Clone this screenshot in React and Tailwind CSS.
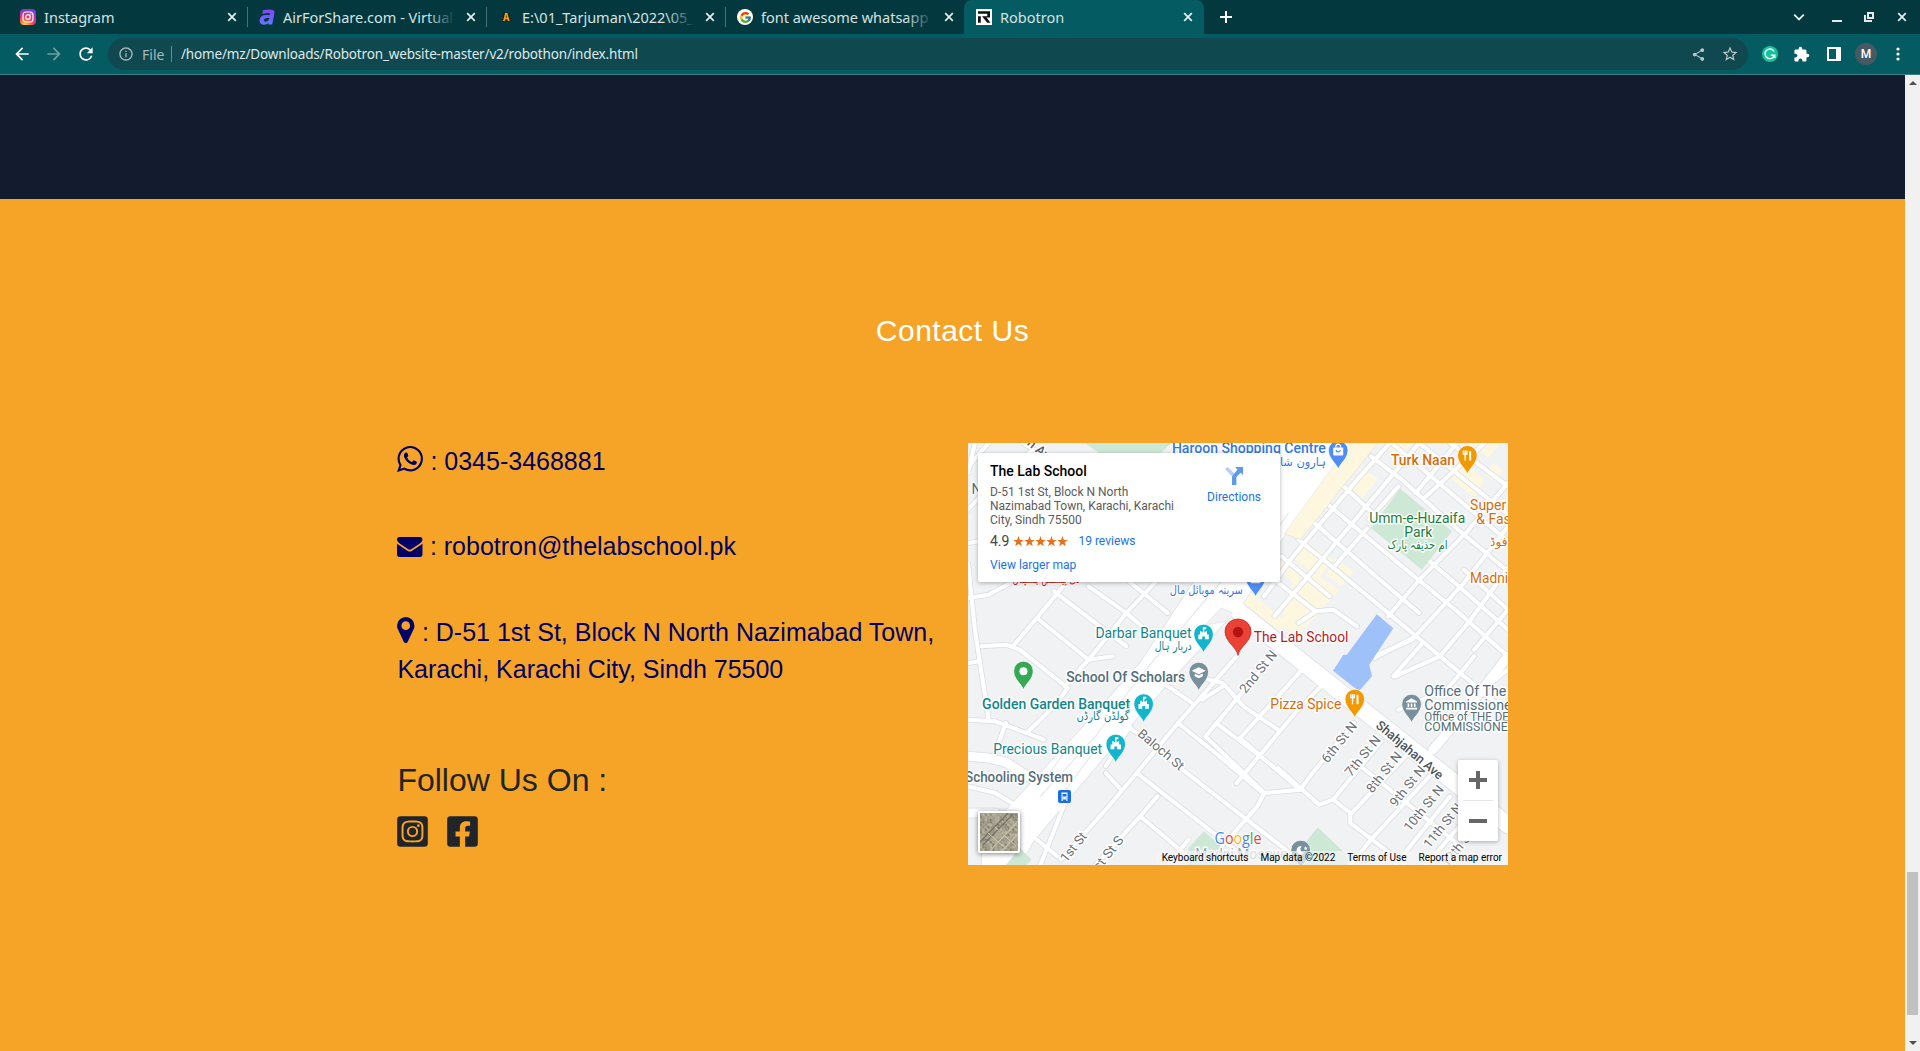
import React from "react";
import { FaFacebookSquare, FaInstagramSquare } from "react-icons/fa";
import { MdArrowBack, MdArrowForward, MdRefresh, MdInfoOutline, MdShare, MdStarBorder, MdExtension } from "react-icons/md";
import { FcGoogle } from "react-icons/fc";

/* ---------- browser chrome ---------- */

function CloseX({ className = "" }) {
  return (
    <svg viewBox="0 0 16 16" className={"h-4 w-4 shrink-0 " + className} fill="none" stroke="#e4efef" strokeWidth="1.7">
      <path d="M4.2 4.2l7.6 7.6M11.8 4.2l-7.6 7.6" />
    </svg>
  );
}

function InstagramIcon() {
  return (
    <svg viewBox="0 0 16 16" className="h-4 w-4 shrink-0">
      <defs>
        <radialGradient id="ig" cx="0.3" cy="1.05" r="1.05">
          <stop offset="0" stopColor="#ffdd55" />
          <stop offset="0.3" stopColor="#fb7c3c" />
          <stop offset="0.6" stopColor="#e0357a" />
          <stop offset="1" stopColor="#7a3ad8" />
        </radialGradient>
      </defs>
      <rect width="16" height="16" rx="4" fill="url(#ig)" />
      <rect x="3" y="3" width="10" height="10" rx="3" fill="none" stroke="#fff" strokeWidth="1.2" />
      <circle cx="8" cy="8" r="2.3" fill="none" stroke="#fff" strokeWidth="1.2" />
      <circle cx="11" cy="5" r="0.7" fill="#fff" />
    </svg>
  );
}

function AirIcon() {
  return (
    <svg viewBox="0 0 16 16" className="h-4 w-4 shrink-0" fill="none">
      <defs>
        <linearGradient id="air" x1="0" y1="0" x2="0" y2="1">
          <stop offset="0" stopColor="#8a3ffc" />
          <stop offset="1" stopColor="#5b7cfa" />
        </linearGradient>
      </defs>
      <path d="M4 1.2Q9 0 13 .8Q16 1.2 15.4 4L13.2 15.6H9.4L9.6 14.3Q7 16.3 3.6 15.6Q.2 14.6 .6 11Q1.2 6.2 7.3 6.1L11 6Q11.4 4 9.4 4Q6.5 4 3.4 5ZM10.5 8.8L7.6 9Q5 9.3 4.8 11.2Q4.9 13 7 12.6Q9.8 12.2 10.5 8.8Z" fill="url(#air)" fillRule="evenodd" />
    </svg>
  );
}

function AppIcon() {
  return (
    <svg viewBox="0 0 16 16" className="h-4 w-4 shrink-0">
      <rect x="4.5" y="4" width="8" height="9" fill="#1c2326" />
      <path d="M7.2 4h2.2l2.2 8H9.8l-.4-1.8H7.2L6.8 12H5zM7.6 8.6h1.4l-.7-2.8z" fill="#f7a600" fillRule="evenodd" />
    </svg>
  );
}

function GoogleIcon() {
  return (
    <span className="flex h-4 w-4 shrink-0 items-center justify-center rounded-full bg-white">
      <FcGoogle size={13} />
    </span>
  );
}

function RobotronIcon() {
  return (
    <svg viewBox="0 0 16 16" className="h-4 w-4 shrink-0">
      <rect width="16" height="16" fill="#fff" />
      <path d="M2 2.2h12v6.2h-3.4l3.8 5.4h-3.2L6 7.2h5.3V4.7H2zM2 7.2h2.8v6.6H2z" fill="#111" />
    </svg>
  );
}

function Tab({ icon, title, fade, sep }) {
  return (
    <div className="flex h-[34px] w-[239px] shrink-0 items-center pl-[11px]">
      {icon}
      <div className="relative ml-2 w-[172px] shrink-0 overflow-hidden whitespace-nowrap text-[14.5px] leading-[20px] text-[#d5e2e2]">
        {title}
        {fade && <div className="absolute inset-y-0 right-0 w-7 bg-gradient-to-r from-transparent to-[#03393e]" />}
      </div>
      <CloseX className="ml-2" />
      {sep && <div className="ml-[7px] h-5 w-px bg-[#4a7377]" />}
    </div>
  );
}

function TabStrip() {
  return (
    <div className="flex h-[34px] bg-[#03393e] pl-[9px]">
      <Tab icon={<InstagramIcon />} title="Instagram" sep />
      <Tab icon={<AirIcon />} title="AirForShare.com - Virtual D" fade sep />
      <Tab icon={<AppIcon />} title="E:\01_Tarjuman\2022\05_M" fade sep />
      <Tab icon={<GoogleIcon />} title="font awesome whatsapp c" fade />
      <div className="-ml-px flex h-[34px] w-[240px] items-center rounded-t-lg bg-[#045b61] pl-3">
        <RobotronIcon />
        <div className="ml-2 w-[172px] text-[14.5px] leading-[20px] text-[#d5e2e2]">Robotron</div>
        <CloseX className="ml-2" />
      </div>
      <svg viewBox="0 0 16 16" className="ml-[14px] mt-[9px] h-4 w-4" stroke="#fff" strokeWidth="2">
        <path d="M8 2v12M2 8h12" />
      </svg>
      <div className="ml-auto flex h-[34px] items-center pr-[10px]">
        <svg viewBox="0 0 16 16" className="h-4 w-4" fill="none" stroke="#e4efef" strokeWidth="1.8">
          <path d="M3.2 5.6L8 10.4l4.8-4.8" />
        </svg>
        <div className="ml-[25px] mt-[8px] h-[2px] w-[10px] bg-[#e4e9ee]" />
        <svg viewBox="0 0 10 10" className="ml-[22px] h-[10px] w-[10px]" fill="none" stroke="#e4e9ee" strokeWidth="2">
          <path d="M4 1h5v5H4zM1 3v6h7" />
        </svg>
        <CloseX className="ml-5" />
      </div>
    </div>
  );
}

function Toolbar() {
  return (
    <div className="flex h-[41px] items-center border-b border-[#3f7f84] bg-[#045b61] text-white">
      <MdArrowBack size={20} className="ml-3" />
      <MdArrowForward size={20} className="ml-3 text-[#6f9ea2]" />
      <MdRefresh size={20} className="ml-3" />
      <div className="ml-3 flex h-8 w-[1640px] items-center rounded-full bg-[#10484f] pl-[10px] text-[14px] text-[#a6b9bb]">
        <MdInfoOutline size={16} />
        <span className="ml-2 w-[22px]">File</span>
        <div className="ml-[7px] h-4 w-px bg-[#6b8c8f]" />
        <span className="ml-[9px] whitespace-nowrap text-[13.5px] tracking-[-0.16px] text-[#dfe8e8]">/home/mz/Downloads/Robotron_website-master/v2/robothon/index.html</span>
        <MdShare size={15} className="ml-auto text-[#bccaca]" />
        <MdStarBorder size={18} className="ml-[15px] mr-[9px] text-[#bccaca]" />
      </div>
      <div className="ml-[14px] flex h-4 w-4 items-center justify-center rounded-full bg-[#15c39a]">
        <svg viewBox="0 0 16 16" className="h-4 w-4" fill="none" stroke="#fff" strokeWidth="1.4">
          <path d="M12 5.3A4.8 4.8 0 1 0 12.4 9.4M12.8 12V9.2H8.8" />
        </svg>
      </div>
      <MdExtension size={17} className="ml-[15px]" />
      <svg viewBox="0 0 14 14" className="ml-[17px] h-[14px] w-[14px]">
        <path d="M0 0h14v14H0zM2 2v10h7V2z" fill="#fff" fillRule="evenodd" />
      </svg>
      <div className="ml-[14px] flex h-[22px] w-[22px] items-center justify-center rounded-full bg-[#455a64] font-['Roboto'] text-[12px] font-medium">M</div>
      <svg viewBox="0 0 4 14" className="ml-[19px] h-[14px] w-1" fill="#fff">
        <circle cx="2" cy="2" r="1.6" />
        <circle cx="2" cy="7" r="1.6" />
        <circle cx="2" cy="12" r="1.6" />
      </svg>
    </div>
  );
}

/* ---------- map ---------- */

const STREETS = [
  // north-east blocks
  "M1170 40L1260 110L1400 240L1568 385",
  "M1080 120L1170 205L1420 425L1568 560",
  "M1040 180L1290 395L1420 505L1568 640",
  "M1000 235L1230 440L1310 510",
  "M960 290L1080 390L1290 570L1568 810",
  "M910 340L1050 460",
  "M870 395L1010 505",
  "M1230 0L1568 295",
  "M1310 0L1568 215",
  "M1400 0L1568 130",
  "M1568 500L1440 380",
  "M1225 0L1130 110L940 345L860 460",
  "M1310 0L1100 260L1000 385L890 520",
  "M1250 130L1165 230",
  "M1160 255L1060 375",
  "M1420 0L1380 50L1300 150",
  "M1500 0L1330 160",
  "M1568 120L1450 265L1320 400L1220 520",
  "M1568 250L1440 420L1290 590L1180 640",
  "M1568 375L1460 530L1370 640L1240 700",
  "M1568 500L1470 620",
  "M960 540L1010 505L1060 500L1130 550",
  "M1290 585L1180 645",
  "M1320 600L1235 700",
  "M1470 640L1390 740L1250 800",
  "M1568 680L1470 760",
  // south blocks
  "M450 840L490 870L610 970L860 1170L980 1266",
  "M510 680L650 780",
  "M610 840L730 940L850 1045",
  "M690 880L860 1050",
  "M740 730L680 770",
  "M720 840L850 940L965 1040",
  "M790 885L850 940",
  "M660 700L740 720L800 790L900 860",
  "M970 680L900 760L790 885",
  "M900 620L690 880",
  "M1020 735L950 810L780 1020",
  "M1120 840L1000 990L965 1040L860 1050L840 1090L690 1266",
  "M900 975L1020 1085L1060 1070L1200 895",
  "M1060 1070L1110 1110",
  "M1140 970L1310 1110L1430 1210",
  "M1270 940L1110 1115L1110 1140L1270 1266",
  "M1340 1000L1170 1190L1110 1266",
  "M1400 1060L1240 1266",
  "M1460 1110L1330 1266",
  "M780 640L610 840L490 990L400 1100L270 1250",
  "M400 990L440 1035",
  "M490 990L800 1240",
  "M550 1060L500 1120L370 1266",
  "M500 1120L650 1250",
  "M640 1190L580 1266",
  "M470 850L400 970",
  // north-west blocks
  "M250 445L345 520L460 610",
  "M200 525L350 650L420 640",
  "M350 430L460 510L560 600",
  "M450 400L580 510",
  "M280 425L200 525L130 610",
  "M560 400L460 510L350 650L280 730",
  "M0 465L60 455L140 410",
  "M40 610L110 605L150 620L290 735L250 790L170 870",
  "M0 360L20 560L60 830",
  "M20 0L0 90",
  "M0 300L60 290",
  "M0 660L35 655",
  "M0 830L80 835L170 870L220 890",
  "M110 840L75 940",
  "M0 1030L80 1050L150 1095",
  "M160 0L330 110",
  "M0 200L80 110L190 20",
  "M60 0L10 60",
  "M290 1060L270 1110L210 1266",
  "M200 1190L260 1240",
];

const BOLD_ROADS = ["M0 940L60 945L110 958L190 1010", "M1568 640L1440 810L1350 920", "M0 1110L80 1110"];

const CREAM = [
  "M1110 0H1190L965 290L920 272Z",
  "M1145 75L1190 108L1145 165L1105 125Z",
  "M1400 105L1440 60L1500 110L1470 165Z",
  "M1470 0H1545L1510 45Z",
  "M1200 0H1290L1250 45Z",
  "M1525 60L1555 85L1530 115L1500 95Z",
  "M985 300L1060 350L1020 405L950 350Z",
  "M1065 345L1120 385L1085 430L1040 395Z",
  "M920 335L980 385L950 425L900 375Z",
  "M820 450L925 535L900 560L800 480Z",
  "M930 440L990 385L1080 440L960 575L910 555Z",
];

const HWY = "M880 0H1130L920 275L800 480L640 655L470 850L190 1195L150 1266H40V1180L130 1080L300 890L500 660L640 440L870 100Z";

// Label coordinates are in street units; they are scaled to pixels here.
const px = (x) => x / 2.9037;
const py = (y) => y / 3;

function Label({ x, y, w, size = 14, fill, weight = 400, anchor = "start", rot = 0, halo = 3, rtl, children }) {
  return (
    <text
      transform={"translate(" + px(x) + " " + py(y) + ") rotate(" + rot + ")"}
      fontSize={size}
      fontWeight={weight}
      fontFamily={rtl ? '"DejaVu Sans", sans-serif' : "Roboto, sans-serif"}
      textAnchor={anchor}
      textLength={w}
      lengthAdjust="spacingAndGlyphs"
      fill={fill}
      stroke="#fff"
      strokeWidth={halo}
      strokeLinejoin="round"
      paintOrder="stroke"
    >
      {children}
    </text>
  );
}

function Pin({ x, y, fill, children }) {
  return (
    <g transform={"translate(" + px(x) + " " + py(y) + ")"}>
      <path d="M0 0C-1.2-5.5-9.8-10.5-9.8-19A9.8 9.8 0 0 1 9.8-19C9.8-10.5 1.2-5.5 0 0Z" fill={fill} stroke="#fff" strokeWidth="0.7" />
      <g transform="translate(0 -18.8)">{children}</g>
    </g>
  );
}

const Castle = () => (
  <path d="M-5.200 5V.2H-3.400V-3.200H-2V-2H-.7V-7H2.600V-5H.7V-2H2V-3.200H3.400V.2H5.200V5H1.400V2.200H-1.400V5Z" fill="#fff" />
);
const Fork = () => (
  <g stroke="#fff" fill="none">
    <path d="M-4-5v3.4h3.6V-5M-2.2-5V5" strokeWidth="1.4" />
    <path d="M2.8 5V-4.4" strokeWidth="2" />
  </g>
);
const Bag = () => (
  <g>
    <rect x="-5" y="-3" width="10" height="8" rx="1" fill="#fff" />
    <path d="M-2.4-3V-4a2.4 2.4 0 0 1 4.8 0v1" stroke="#fff" strokeWidth="1.3" fill="none" />
    <path d="M-2-.6a2 2 0 0 0 4 0" stroke="#4e8df5" strokeWidth="1.2" fill="none" />
  </g>
);

function MapCanvas() {
  const teal = "#12858d";
  const gray = "#546e7a";
  const orange = "#d56e0c";
  const blue = "#3478e5";
  const st = "#6b7075";
  return (
    <svg viewBox="0 0 540 422" className="block h-[422px] w-[540px]">
      <rect width="540" height="422" fill="#f1f2f4" />
      <g transform="scale(0.34439 0.33333)" fill="none" strokeLinejoin="round" strokeLinecap="round">
        <path d="M340 0H590L560 30H380Z" fill="#cee8d6" />
        <g fill="#fef7e0">{CREAM.map((d) => <path key={d} d={d} />)}</g>
        <g stroke="#dcdfe4" strokeWidth="17">{STREETS.map((d) => <path key={d} d={d} />)}</g>
        <g stroke="#dcdfe4" strokeWidth="32">{BOLD_ROADS.map((d) => <path key={d} d={d} />)}</g>
        <path d={HWY} stroke="#dcdfe4" strokeWidth="4" />
        <path d="M780 500L1035 710L1390 1000L1568 1146" stroke="#dcdfe4" strokeWidth="54" />
        <g stroke="#fff" strokeWidth="12">{STREETS.map((d) => <path key={d} d={d} />)}</g>
        <g stroke="#fff" strokeWidth="27">{BOLD_ROADS.map((d) => <path key={d} d={d} />)}</g>
        <path d={HWY} fill="#fff" />
        <path d="M780 500L1035 710L1390 1000L1568 1146" stroke="#fff" strokeWidth="49" />
        <path d="M690 545L735 495L768 510L745 535Z" fill="#f1f2f4" stroke="#dcdfe4" strokeWidth="2" />
        <path d="M740 410L500 700L370 880L210 1060M300 900L230 1000M370 920L270 1060M930 210L890 270" stroke="#e3e6ea" strokeWidth="3" />
        <path d="M1110 0H1190L965 290L920 272Z" fill="#fef7e0" stroke="#e6e3d8" strokeWidth="2" />
        <path d="M1255 137L1405 265L1318 380L1170 255Z" fill="#cee8d6" />
        <path d="M1187 514L1235 556L1165 665L1173 700L1135 745L1060 683L1090 635H1100Z" fill="#9fc1fa" />
        <path d="M685 1165L740 1215L720 1266H640V1215Z" fill="#cee8d6" />
        <path d="M1015 1153L1100 1235V1266H930Z" fill="#cee8d6" />
        <path d="M150 1215L185 1250L170 1266H110Z" fill="#cee8d6" />
      </g>

      <Label x={170} y={4} rot={40} fill="#5b6065" weight={500} size={13}>n Ave</Label>
      <Label x={10} y={152} fill={gray}>N</Label>
      <Label x={592} y={30} w={154} fill={blue} weight={500}>Haroon Shopping Centre</Label>
      <Label x={1040} y={68} size={11.5} w={63} anchor="end" fill={blue} rtl>ہارون شاپنگ</Label>
      <Pin x={1075} y={79} fill="#4e8df5"><Bag /></Pin>
      <Label x={1228} y={66} w={64} fill={orange} weight={500}>Turk Naan</Label>
      <Pin x={1450} y={94} fill="#f29900"><Fork /></Pin>
      <Label x={1458} y={201} w={36} fill={orange}>Super</Label>
      <Label x={1476} y={243} fill={orange}>{"& Fast"}</Label>
      <Label x={1516} y={310} size={12} fill={orange} rtl>فوڈ</Label>
      <Label x={1458} y={419} w={38} fill={orange}>Madni</Label>
      <Label x={1165} y={240} w={96} fill="#188041">Umm-e-Huzaifa</Label>
      <Label x={1267} y={282} w={28} fill="#188041">Park</Label>
      <Label x={1305} y={317} size={12} w={60} anchor="middle" fill="#188041" rtl>ام حذیفہ پارک</Label>
      <Label x={130} y={421} size={12} w={67} fill="#c5221f" rtl>دی پیشنس ہسپتال</Label>
      <Pin x={835} y={462} fill="#4e8df5"><Bag /></Pin>
      <Label x={692} y={452} size={12} w={73} anchor="middle" fill={blue} rtl>سرینہ موبائل مال</Label>

      <Label x={370} y={586} w={96} fill={teal}>Darbar Banquet</Label>
      <Label x={596} y={620} size={12} w={37} anchor="middle" fill={teal} rtl>دربار ہال</Label>
      <Pin x={684} y={630} fill="#12b5cb"><Castle /></Pin>
      <Label x={285} y={718} w={119} fill={gray} weight={500}>School Of Scholars</Label>
      <Pin x={670} y={744} fill="#78909c">
        <path d="M0-5L7-1.5 0 2-7-1.5ZM-4 1.4L0 3.4 4 1.4V4L0 6-4 4Z" fill="#fff" />
      </Pin>
      <Pin x={161} y={741} fill="#34a853"><circle r="4" fill="#fff" /></Pin>
      <Label x={41} y={797} w={148} fill={teal} weight={500}>Golden Garden Banquet</Label>
      <Label x={392} y={830} size={12} w={53} anchor="middle" fill={teal} rtl>گولڈن گارڈن</Label>
      <Pin x={510} y={839} fill="#12b5cb"><Castle /></Pin>
      <Label x={73} y={934} w={109} fill={teal}>Precious Banquet</Label>
      <Pin x={429} y={960} fill="#12b5cb"><Castle /></Pin>
      <Label x={305} y={1018} w={108} anchor="end" fill={gray} weight={500}>Schooling System</Label>
      <g transform="translate(90 347)">
        <rect width="13" height="13" rx="2" fill="#1a6fe0" />
        <path d="M3.5 2.5h6v7h-6z" fill="#fff" />
        <path d="M4.5 4h4v2.4h-4zM4.4 7.4h1v1h-1zM7.6 7.4h1v1h-1z" fill="#1a6fe0" />
        <path d="M3.5 9.5v1.4h1.2V9.5M8.3 9.5v1.4h1.2V9.5" fill="#fff" />
      </g>

      <Label x={878} y={799} w={71} fill={orange}>Pizza Spice</Label>
      <Pin x={1123} y={825} fill="#f29900"><Fork /></Pin>
      <Label x={1325} y={760} w={82} fill={gray}>Office Of The</Label>
      <Label x={1325} y={801} fill={gray} w={92}>Commissioner</Label>
      <Label x={1325} y={833} size={12} halo={2} w={113} fill={gray}>Office of THE DEPUTY</Label>
      <Label x={1325} y={865} size={12} w={91} fill={gray}>COMMISSIONER</Label>
      <Pin x={1288} y={840} fill="#78909c">
        <path d="M-5.5-2.6L0-6l5.5 3.4v1h-11zM-5.5 3.6h11v1.6h-11zM-4-.8h1.6v3.6H-4zM-.8-.8H.8v3.6H-.8zM2.4-.8H4v3.6H2.4z" fill="#fff" />
      </Pin>

      <Label x={490} y={876} w={56} rot={40} size={13} fill={st}>Baloch St</Label>
      <Label x={806} y={754} w={51} rot={-51} size={13} fill={st}>2nd St N</Label>
      <Label x={1044} y={962} w={48} rot={-51} size={13} fill={st}>6th St N</Label>
      <Label x={1112} y={1003} w={48} rot={-51} size={13} fill={st}>7th St N</Label>
      <Label x={1174} y={1052} w={48} rot={-51} size={13} fill={st}>8th St N</Label>
      <Label x={1242} y={1094} w={48} rot={-51} size={13} fill={st}>9th St N</Label>
      <Label x={1283} y={1168} w={55} rot={-51} size={13} fill={st}>10th St N</Label>
      <Label x={1340} y={1218} w={53} rot={-51} size={13} fill={st}>11th St N</Label>
      <Label x={1392} y={1274} w={55} rot={-51} size={13} fill={st}>12th St N</Label>
      <Label x={285} y={1260} w={34} rot={-51} size={13} fill={st}>1st St</Label>
      <Label x={366} y={1304} w={48} rot={-51} size={13} fill={st}>1st St S</Label>
      <Label x={1182} y={851} w={83} rot={40} size={13} weight={500} fill="#4e5357">Shahjahan Ave</Label>

      <Label x={660} y={1248} w={92} fill="#9aa9b1">Madni Mosque</Label>
      <Pin x={966} y={1278} fill="#78909c">
        <path d="M1 -4A4.2 4.2 0 1 0 3.6 2.4A3.6 3.6 0 0 1 1-4ZM5-4l.6 1.3 1.4.2-1 1 .2 1.4L5-.8l-1.200.7.2-1.400-1-1 1.400-.2z" fill="#fff" />
      </Pin>

      <g transform="translate(270 212.500)">
        <path d="M0 0C-1.600-9-13-13.500-13-24A13 12.600 0 0 1 13-24C13-13.500 1.600-9 0 0Z" fill="#ea4335" stroke="#b31412" strokeWidth="0.6" />
        <circle cy="-23.500" r="5.200" fill="#b31412" />
      </g>
      <Label x={830} y={597} w={94.5} fill="#b5201c">The Lab School</Label>

      <text x="246.500" y="400.500" fontFamily="'Open Sans', Roboto, sans-serif" fontSize="15.500" fontWeight="500" textLength="47" lengthAdjust="spacingAndGlyphs" stroke="#fff" strokeWidth="2" paintOrder="stroke">
        <tspan fill="#4285f4">G</tspan><tspan fill="#ea4335">o</tspan><tspan fill="#fbbc04">o</tspan><tspan fill="#4285f4">g</tspan><tspan fill="#34a853">l</tspan><tspan fill="#ea4335">e</tspan>
      </text>
    </svg>
  );
}

function PlaceCard() {
  return (
    <div className="absolute left-[10px] top-[10px] flex h-[129px] w-[302px] justify-between rounded-[2px] bg-white pl-3 pr-[19px] pt-[9px] font-['Roboto'] text-[12px] leading-[14px] shadow-[0_1px_4px_rgba(0,0,0,0.3)]">
      <div>
        <div className="text-[14px] font-medium leading-[18px] text-black">The Lab School</div>
        <div className="mt-[5px] w-[190px] text-[#5b5b5b]">D-51 1st St, Block N North Nazimabad Town, Karachi, Karachi City, Sindh 75500</div>
        <div className="mt-[5px] flex h-[18px] items-center">
          <span className="text-[14px] text-[#444]">4.9</span>
          <svg viewBox="0 0 55 11" className="ml-[4px] h-[11px] w-[55px]" fill="#e7711b">
            {[0, 11, 22, 33, 44].map((x) => (
              <path key={x} transform={"translate(" + x + " 0)"} d="M5.500 0L6.900 3.900H10.800L7.700 6.300L8.800 10.200L5.500 7.900L2.200 10.200L3.300 6.300L.2 3.900H4.100Z" />
            ))}
          </svg>
          <span className="ml-[10px] text-[#1a73e8]">19 reviews</span>
        </div>
        <div className="mt-[8px] text-[#1a73e8]">View larger map</div>
      </div>
      <div className="flex flex-col items-center pt-[4px] text-[#1a73e8]">
        <svg viewBox="0 0 20 20" className="h-5 w-5">
          <path d="M1 3L3.500.8L12 9L9.500 12Z" fill="#b5d0f6" />
          <path d="M11 1H19V9L16.600 6.800L12.400 11V19H8V10.500L13.500 3.600Z" fill="#5f9ae6" />
        </svg>
        <div className="mt-[4px]">Directions</div>
      </div>
    </div>
  );
}

function Satellite() {
  const marks = [];
  for (let i = 0; i < 16; i++) {
    for (let j = 0; j < 16; j++) {
      const n = (i * 37 + j * 53 + i * j * 11) % 17;
      marks.push({ x: i * 2.5, y: j * 2.5, n });
    }
  }
  const tones = ["#8f8c7c", "#b3ad9a", "#77786a", "#c4bca8", "#a49e8a", "#989683"];
  return (
    <div className="absolute bottom-[12px] left-[10px] h-[42px] w-[42px] rounded-[2px] border-2 border-white shadow-[0_1px_5px_rgba(0,0,0,0.5)]">
      <svg viewBox="0 0 38 38" className="h-full w-full">
        <rect width="38" height="38" fill="#a8a28e" />
        {marks.map((m) => (
          <path key={m.x + "-" + m.y} d={"M" + m.x + " " + (m.y + 1) + "l1.800 1.600"} stroke={tones[m.n % 6]} strokeWidth="1.800" opacity="0.75" />
        ))}
        <path d="M0 29L28 0M3 32L33 1" stroke="#6b6c66" strokeWidth="1.500" opacity="0.8" />
        <path d="M10 38L38 8M22 38L38 21" stroke="#c6bea9" strokeWidth="1.200" />
        <path d="M8 20L26 36M15 14L36 33" stroke="#d2c9b2" strokeWidth="0.900" />
      </svg>
    </div>
  );
}

function MapEmbed() {
  return (
    <div className="relative h-[422px] w-[540px] overflow-hidden">
      <MapCanvas />
      <PlaceCard />
      <Satellite />
      <div className="absolute bottom-[24px] right-[10px] flex h-[81px] w-10 flex-col items-center rounded-[2px] bg-white shadow-[0_1px_4px_rgba(0,0,0,0.3)]">
        <div className="flex h-10 items-center"><svg viewBox="0 0 18 18" className="h-[18px] w-[18px]" fill="#666"><path d="M7 0h4v7h7v4h-7v7H7v-7H0V7h7z" /></svg></div>
        <div className="h-px w-[30px] bg-[#e6e6e6]" />
        <div className="flex h-10 items-center"><div className="h-1 w-[18px] bg-[#666]" /></div>
      </div>
      <div className="absolute bottom-0 right-0 flex h-[14px] items-center gap-[12px] whitespace-nowrap bg-[#f5f5f5]/70 pl-[6px] pr-[6px] font-['Roboto'] text-[10px] leading-[14px] text-black">
        <span>Keyboard shortcuts</span>
        <span>Map data ©2022</span>
        <span>Terms of Use</span>
        <span>Report a map error</span>
      </div>
    </div>
  );
}

/* ---------- page ---------- */

function WhatsappGlyph() {
  return (
    <svg viewBox="128 122 1536 1542" className="mr-[7px] inline-block h-[26px] w-[26px] align-[-2px]" fill="currentColor">
      <path d="M1113 974q13 0 97.500 44t89.500 53q2 5 2 15 0 33-17 76-16 39-71 65.500t-102 26.500q-57 0-190-62-98-45-170-118t-148-185q-72-107-71-194v-8q3-91 74-158 24-22 52-22 6 0 18 1.500t19 1.500q19 0 26.500 6.500t15.500 27.500q8 20 33 88t25 75q0 21-34.500 57.500t-34.500 46.500q0 7 5 15 34 73 102 137 56 53 151 101 12 7 22 7 15 0 54-48.500t52-48.500zm-203 530q127 0 243.500-50t200.500-134 134-200.500 50-243.500-50-243.500-134-200.500-200.500-134-243.500-50-243.500 50-200.500 134-134 200.500-50 243.500q0 203 120 368l-79 233 242-77q158 104 345 104zm0-1382q153 0 292.500 60t240.500 161 161 240.500 60 292.500-60 292.500-161 240.500-240.500 161-292.500 60q-195 0-365-94l-417 134 136-405q-108-178-108-389 0-153 60-292.500t161-240.500 240.500-161 292.500-60z" />
    </svg>
  );
}

function EnvelopeGlyph() {
  return (
    <svg viewBox="0 256 1792 1408" className="mr-[7px] inline-block h-[20px] w-[25.5px] align-[-2px]" fill="currentColor">
      <path d="M1792 710v794q0 66-47 113t-113 47h-1472q-66 0-113-47t-47-113v-794q44 49 101 87 362 246 497 345 57 42 92.500 65.500t94.500 48 110 24.500h2q51 0 110-24.500t94.500-48 92.500-65.500q170-123 498-345 57-39 100-87zm0-294q0 79-49 151t-122 123q-376 261-468 325-10 7-42.500 31t-54 38.500-52 32.500-57.500 27-50 9h-2q-23 0-50-9t-57.500-27-52-32.500-54-38.500-42.500-31q-91-64-262-182.500t-205-142.500q-62-42-117-115.500t-55-136.500q0-78 41.500-130t118.500-52h1472q65 0 112.500 47t47.500 113z" />
    </svg>
  );
}

function MarkerGlyph() {
  return (
    <svg viewBox="384 128 1024 1536" className="mr-[7px] inline-block h-[26px] w-[17.5px] align-[-2px]" fill="currentColor">
      <path d="M1152 640q0-106-75-181t-181-75-181 75-75 181 75 181 181 75 181-75 75-181zm256 0q0 109-33 179l-364 774q-16 33-47.500 52t-67.500 19-67.500-19-46.500-52l-365-774q-33-70-33-179 0-212 150-362t362-150 362 150 150 362z" />
    </svg>
  );
}

function Contact() {
  return (
    <section className="h-[852px] bg-[#f6a428] pt-[114px] font-['Liberation_Sans',sans-serif]">
      <h2 className="text-center text-[30px] leading-[36px] tracking-[0.5px] text-white">Contact Us</h2>
      <div className="ml-[397px] mt-[94px] flex">
        <div className="w-[571px] pl-[0.4px] text-[25px] leading-[37px] text-[#000066]">
          <p className="h-[37px]"><WhatsappGlyph />: 0345-3468881</p>
          <p className="mt-12 h-[37px]"><EnvelopeGlyph />: robotron@thelabschool.pk</p>
          <p className="mt-[49px] whitespace-nowrap"><MarkerGlyph />: D-51 1st St, Block N North Nazimabad Town,<br />Karachi, Karachi City, Sindh 75500</p>
          <h3 className="mt-[73px] text-[32px] leading-[38px] text-[#212529]">Follow Us On :</h3>
          <div className="mt-[15px] flex gap-[19px] text-[#212529]">
            <FaInstagramSquare className="h-[35px] w-[31px]" />
            <FaFacebookSquare className="h-[35px] w-[31px]" />
          </div>
        </div>
        <MapEmbed />
      </div>
    </section>
  );
}

function Scrollbar() {
  return (
    <div className="flex h-[976px] w-[15px] shrink-0 flex-col items-center bg-[#f1f1f1]">
      <svg viewBox="0 0 8 4" className="mt-[6px] h-1 w-2" fill="#505050"><path d="M4 0l4 4H0z" /></svg>
      <div className="mt-[787px] h-[143px] w-[11px] bg-[#c1c1c1]" />
      <svg viewBox="0 0 8 4" className="mt-[26px] h-1 w-2" fill="#505050"><path d="M4 4L0 0h8z" /></svg>
    </div>
  );
}

export default function App() {
  return (
    <div className="h-[1051px] w-[1920px] overflow-hidden font-['Noto_Sans',sans-serif]">
      <TabStrip />
      <Toolbar />
      <div className="flex">
        <main className="w-[1905px]">
          <div className="h-[124px] bg-[#131b2f]" />
          <Contact />
        </main>
        <Scrollbar />
      </div>
    </div>
  );
}
